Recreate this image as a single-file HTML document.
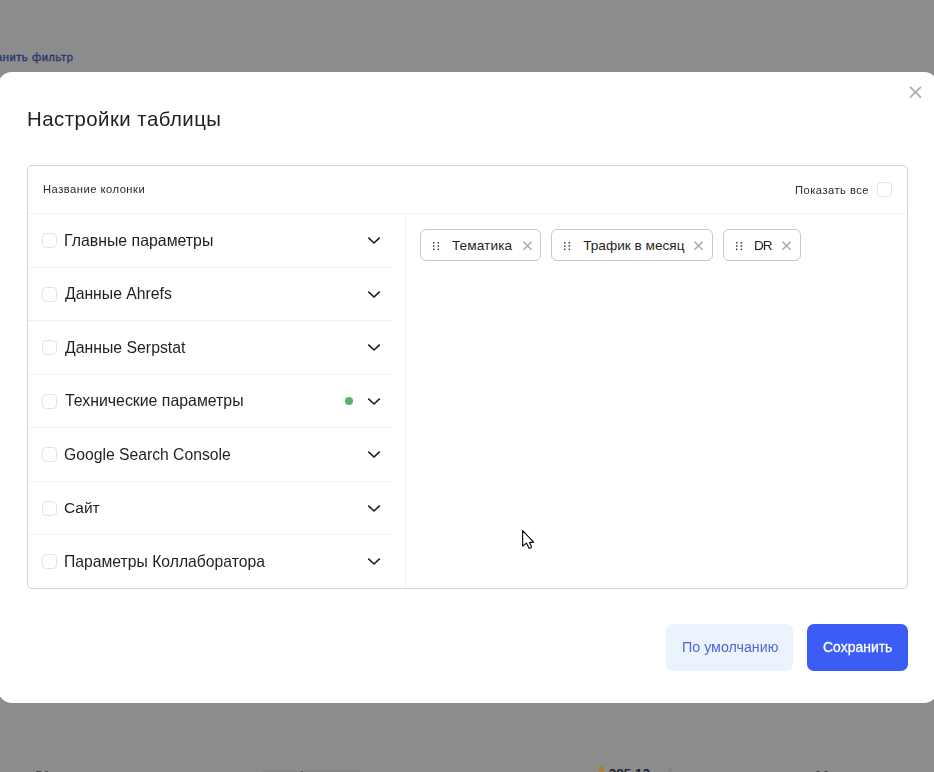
<!DOCTYPE html>
<html><head><meta charset="utf-8">
<style>
*{margin:0;padding:0;box-sizing:border-box}
html,body{width:934px;height:772px;overflow:hidden;background:#8c8c8c;font-family:"Liberation Sans",sans-serif}
.a{position:absolute;white-space:nowrap}
.t{line-height:1;will-change:transform}
.lcd{will-change:auto}
#modal{position:absolute;left:-2.4px;top:72px;width:940px;height:631px;background:#fff;border-radius:14px}
#box{position:absolute;left:27px;top:165px;width:881px;height:424px;border:1px solid #d3d3d3;border-radius:5px}
.hl{position:absolute;height:1px;background:#f2f2f2}
.cb{position:absolute;width:15px;height:15px;border:1px solid #e4e4e4;border-radius:4px;background:#fff}
.chev{position:absolute;left:366px;width:16px;height:10px}
.chip{position:absolute;top:229px;height:32px;border:1px solid #c8c8c8;border-radius:6px;background:#fff}
.btn{position:absolute;top:624px;height:47px;border-radius:7px}
</style></head><body>
<div id="bgtext" class="a t" style="will-change:auto;right:860.5px;top:51.6px;font-size:11.2px;letter-spacing:0.55px;color:#2b356e;-webkit-text-stroke:0.35px #2b356e">Сохранить фильтр</div>
<div class="a" style="left:36px;top:771px;width:5px;height:2px;background:#3c3c3c;border-radius:1px 1px 0 0"></div>
<div class="a" style="left:44.7px;top:771px;width:3.5px;height:2px;background:#404850;border-radius:1px 1px 0 0"></div>
<div class="a" style="left:262px;top:770.5px;width:98px;height:2px;background:#848484;border-radius:3px 3px 0 0"></div>
<div class="a" style="left:301px;top:770.6px;width:1.5px;height:2px;background:#555"></div>
<div class="a" style="left:598.8px;top:766.3px;width:5px;height:7px;background:#a98033;border-radius:2.5px 2.5px 0 0"></div>
<div class="a" style="left:608.8px;top:767px;font:700 13.5px/1 'Liberation Sans';color:#1d212c;white-space:nowrap">385,12</div>
<div class="a" style="left:654px;top:769px;font:400 12px/1 'Liberation Sans';color:#787878;white-space:nowrap">руб</div>
<div class="a" style="left:816px;top:770.6px;width:4px;height:2px;background:#3a3a3a;border-radius:1.5px 1.5px 0 0"></div>
<div class="a" style="left:824px;top:770.6px;width:4px;height:2px;background:#3a3a3a;border-radius:1.5px 1.5px 0 0"></div>
<div id="modal"></div>
<svg class="a" style="left:904px;top:86px" width="24" height="24" viewBox="0 0 24 24"><path d="M6 0.8L17 11.6M17 0.8L6 11.6" stroke="#aaa" stroke-width="1.7" fill="none"/></svg>
<div class="a t" style="left:27.27px;top:109px;font-size:20.4px;color:#222;letter-spacing:0.47px">Настройки таблицы</div>
<div id="box"></div>
<div class="a t" style="left:43.00px;top:184px;font-size:11.2px;color:#2a2a2a;letter-spacing:0.49px">Название колонки</div>
<div class="a t" style="left:794.90px;top:185px;font-size:11.2px;color:#2a2a2a;letter-spacing:0.47px">Показать все</div>
<div class="cb" style="left:877px;top:182px"></div>
<div class="hl" style="left:28px;top:213px;width:879px"></div>
<div class="a" style="left:405px;top:214px;width:1px;height:374px;background:#f0f0f0"></div>
<div class="cb" style="left:42px;top:233.20px"></div>
<div class="a t" style="left:64.20px;top:233px;font-size:15.86px;color:#1f1f1f;">Главные параметры</div>
<svg class="chev" style="top:235.10px" viewBox="0 0 16 10"><path d="M2.3 2.6L8 8L13.7 2.6" stroke="#1a1a1a" stroke-width="1.55" fill="none"/></svg>
<div class="hl" style="left:28px;top:267px;width:366px"></div>
<div class="cb" style="left:42px;top:286.70px"></div>
<div class="a t" style="left:64.90px;top:286px;font-size:15.75px;color:#1f1f1f;">Данные Ahrefs</div>
<svg class="chev" style="top:288.60px" viewBox="0 0 16 10"><path d="M2.3 2.6L8 8L13.7 2.6" stroke="#1a1a1a" stroke-width="1.55" fill="none"/></svg>
<div class="hl" style="left:28px;top:320px;width:366px"></div>
<div class="cb" style="left:42px;top:340.20px"></div>
<div class="a t" style="left:65.10px;top:340px;font-size:15.82px;color:#1f1f1f;">Данные Serpstat</div>
<svg class="chev" style="top:342.10px" viewBox="0 0 16 10"><path d="M2.3 2.6L8 8L13.7 2.6" stroke="#1a1a1a" stroke-width="1.55" fill="none"/></svg>
<div class="hl" style="left:28px;top:374px;width:366px"></div>
<div class="cb" style="left:42px;top:393.70px"></div>
<div class="a t" style="left:64.60px;top:393px;font-size:15.87px;color:#1f1f1f;">Технические параметры</div>
<svg class="chev" style="top:395.60px" viewBox="0 0 16 10"><path d="M2.3 2.6L8 8L13.7 2.6" stroke="#1a1a1a" stroke-width="1.55" fill="none"/></svg>
<div class="a" style="left:345px;top:396.80px;width:8px;height:8px;border-radius:50%;background:#52b46e"></div>
<div class="hl" style="left:28px;top:427px;width:366px"></div>
<div class="cb" style="left:42px;top:447.20px"></div>
<div class="a t" style="left:64.30px;top:447px;font-size:15.71px;color:#1f1f1f;">Google Search Console</div>
<svg class="chev" style="top:449.10px" viewBox="0 0 16 10"><path d="M2.3 2.6L8 8L13.7 2.6" stroke="#1a1a1a" stroke-width="1.55" fill="none"/></svg>
<div class="hl" style="left:28px;top:481px;width:366px"></div>
<div class="cb" style="left:42px;top:500.70px"></div>
<div class="a t" style="left:64.00px;top:500px;font-size:15.48px;color:#1f1f1f;">Сайт</div>
<svg class="chev" style="top:502.60px" viewBox="0 0 16 10"><path d="M2.3 2.6L8 8L13.7 2.6" stroke="#1a1a1a" stroke-width="1.55" fill="none"/></svg>
<div class="hl" style="left:28px;top:534px;width:366px"></div>
<div class="cb" style="left:42px;top:554.20px"></div>
<div class="a t" style="left:63.90px;top:554px;font-size:15.72px;color:#1f1f1f;">Параметры Коллаборатора</div>
<svg class="chev" style="top:556.10px" viewBox="0 0 16 10"><path d="M2.3 2.6L8 8L13.7 2.6" stroke="#1a1a1a" stroke-width="1.55" fill="none"/></svg>
<div class="chip" style="left:420px;width:121px"></div>
<svg class="a" style="left:432.75px;top:241.7px" width="7" height="9"><rect x="0" y="0" width="1.5" height="1.5" fill="#3a3a3a"/><rect x="0" y="3.3" width="1.5" height="1.5" fill="#3a3a3a"/><rect x="0" y="6.6" width="1.5" height="1.5" fill="#3a3a3a"/><rect x="4.6" y="0" width="1.5" height="1.5" fill="#3a3a3a"/><rect x="4.6" y="3.3" width="1.5" height="1.5" fill="#3a3a3a"/><rect x="4.6" y="6.6" width="1.5" height="1.5" fill="#3a3a3a"/></svg>
<div class="a t" style="left:451.90px;top:239px;font-size:13.65px;color:#1f1f1f;letter-spacing:0.1px;will-change:auto">Тематика</div>
<svg class="a" style="left:521.50px;top:240px" width="11" height="11" viewBox="0 0 11 11"><path d="M1.5 1.7L9.5 9.7M9.5 1.7L1.5 9.7" stroke="#a8a8a8" stroke-width="1.5" fill="none"/></svg>
<div class="chip" style="left:551px;width:162px"></div>
<svg class="a" style="left:563.75px;top:241.7px" width="7" height="9"><rect x="0" y="0" width="1.5" height="1.5" fill="#3a3a3a"/><rect x="0" y="3.3" width="1.5" height="1.5" fill="#3a3a3a"/><rect x="0" y="6.6" width="1.5" height="1.5" fill="#3a3a3a"/><rect x="4.6" y="0" width="1.5" height="1.5" fill="#3a3a3a"/><rect x="4.6" y="3.3" width="1.5" height="1.5" fill="#3a3a3a"/><rect x="4.6" y="6.6" width="1.5" height="1.5" fill="#3a3a3a"/></svg>
<div class="a t" style="left:583.20px;top:239px;font-size:13.65px;color:#1f1f1f;letter-spacing:0px;will-change:auto">Трафик в месяц</div>
<svg class="a" style="left:693.00px;top:240px" width="11" height="11" viewBox="0 0 11 11"><path d="M1.5 1.7L9.5 9.7M9.5 1.7L1.5 9.7" stroke="#a8a8a8" stroke-width="1.5" fill="none"/></svg>
<div class="chip" style="left:723px;width:78px"></div>
<svg class="a" style="left:735.75px;top:241.7px" width="7" height="9"><rect x="0" y="0" width="1.5" height="1.5" fill="#3a3a3a"/><rect x="0" y="3.3" width="1.5" height="1.5" fill="#3a3a3a"/><rect x="0" y="6.6" width="1.5" height="1.5" fill="#3a3a3a"/><rect x="4.6" y="0" width="1.5" height="1.5" fill="#3a3a3a"/><rect x="4.6" y="3.3" width="1.5" height="1.5" fill="#3a3a3a"/><rect x="4.6" y="6.6" width="1.5" height="1.5" fill="#3a3a3a"/></svg>
<div class="a t" style="left:753.80px;top:239px;font-size:13.65px;color:#1f1f1f;letter-spacing:-1.0px">DR</div>
<svg class="a" style="left:780.80px;top:240px" width="11" height="11" viewBox="0 0 11 11"><path d="M1.5 1.7L9.5 9.7M9.5 1.7L1.5 9.7" stroke="#a8a8a8" stroke-width="1.5" fill="none"/></svg>
<div class="btn" style="left:666px;width:127px;background:#ebf4fd"></div>
<div class="a t" style="left:681.50px;top:640px;font-size:14.26px;color:#5165da;">По умолчанию</div>
<div class="btn" style="left:807px;width:101px;background:#3c5cf6"></div>
<div class="a t" style="left:823.00px;top:641px;font-size:13.96px;color:#fff;-webkit-text-stroke:0.3px #fff">Сохранить</div>
<svg class="a" style="left:515px;top:525px" width="25" height="30" viewBox="0 0 25 30"><path d="M7.6 5.6L7.7 21.1L11.4 18.1L13.7 22.6Q14.3 23.5 15.3 23.1L16 22.7Q16.7 22.3 16.4 21.5L14.5 17.6L18.6 17.1Z" fill="#fff" stroke="#000" stroke-width="1.1" stroke-linejoin="round"/></svg>
</body></html>
